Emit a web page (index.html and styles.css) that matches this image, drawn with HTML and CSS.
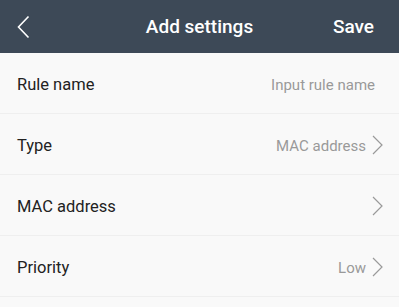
FILE: index.html
```html
<!DOCTYPE html>
<html>
<head>
<meta charset="utf-8">
<link rel="stylesheet" href="styles.css">
</head>
<body>
<div class="app">
  <header class="topbar">
    <div class="back">
      <svg width="14" height="24" viewBox="0 0 14 24"><polyline points="11.5,1.5 1.5,12 11.5,22.5" fill="none" stroke="#fff" stroke-width="1.6"/></svg>
    </div>
    <div class="title">Add settings</div>
    <div class="save">Save</div>
  </header>
  <div class="list">
    <div class="row">
      <span class="label">Rule name</span>
      <span class="value placeholder">Input rule name</span>
    </div>
    <div class="row">
      <span class="label">Type</span>
      <span class="value">MAC address</span>
      <svg class="chev" width="11" height="20" viewBox="0 0 11 20"><polyline points="1,1 10,10 1,19" fill="none" stroke="#9a9a9a" stroke-width="1.2"/></svg>
    </div>
    <div class="row">
      <span class="label">MAC address</span>
      <span class="value"></span>
      <svg class="chev" width="11" height="20" viewBox="0 0 11 20"><polyline points="1,1 10,10 1,19" fill="none" stroke="#9a9a9a" stroke-width="1.2"/></svg>
    </div>
    <div class="row">
      <span class="label">Priority</span>
      <span class="value">Low</span>
      <svg class="chev" width="11" height="20" viewBox="0 0 11 20"><polyline points="1,1 10,10 1,19" fill="none" stroke="#9a9a9a" stroke-width="1.2"/></svg>
    </div>
  </div>
</div>
</body>
</html>
```
FILE: styles.css
```css
html, body {
  margin: 0;
  padding: 0;
  background: #f9f9f9;
  font-family: Roboto, "Noto Sans", sans-serif;
}
.app {
  width: 399px;
  height: 307px;
  overflow: hidden;
}
.topbar {
  height: 53px;
  background: #3d4957;
  display: grid;
  grid-template-columns: 80px 1fr 80px;
  align-items: center;
  color: #fff;
}
.back {
  padding-left: 17px;
  display: flex;
  align-items: center;
  padding-top: 1px;
}
.title {
  text-align: center;
  font-size: 19px;
  font-weight: 500;
}
.save {
  text-align: right;
  padding-right: 25px;
  font-size: 19px;
  font-weight: 500;
}
.row {
  height: 61px;
  box-sizing: border-box;
  border-bottom: 1px solid #efefef;
  display: flex;
  align-items: center;
  padding: 3px 16px 0 17px;
}
.label {
  font-size: 16.5px;
  color: #222;
  flex: 1;
}
.value {
  font-size: 15px;
  color: #999;
}
.placeholder {
  margin-right: 8px;
}
.chev {
  margin-left: 6px;
  margin-top: -2px;
}
```
